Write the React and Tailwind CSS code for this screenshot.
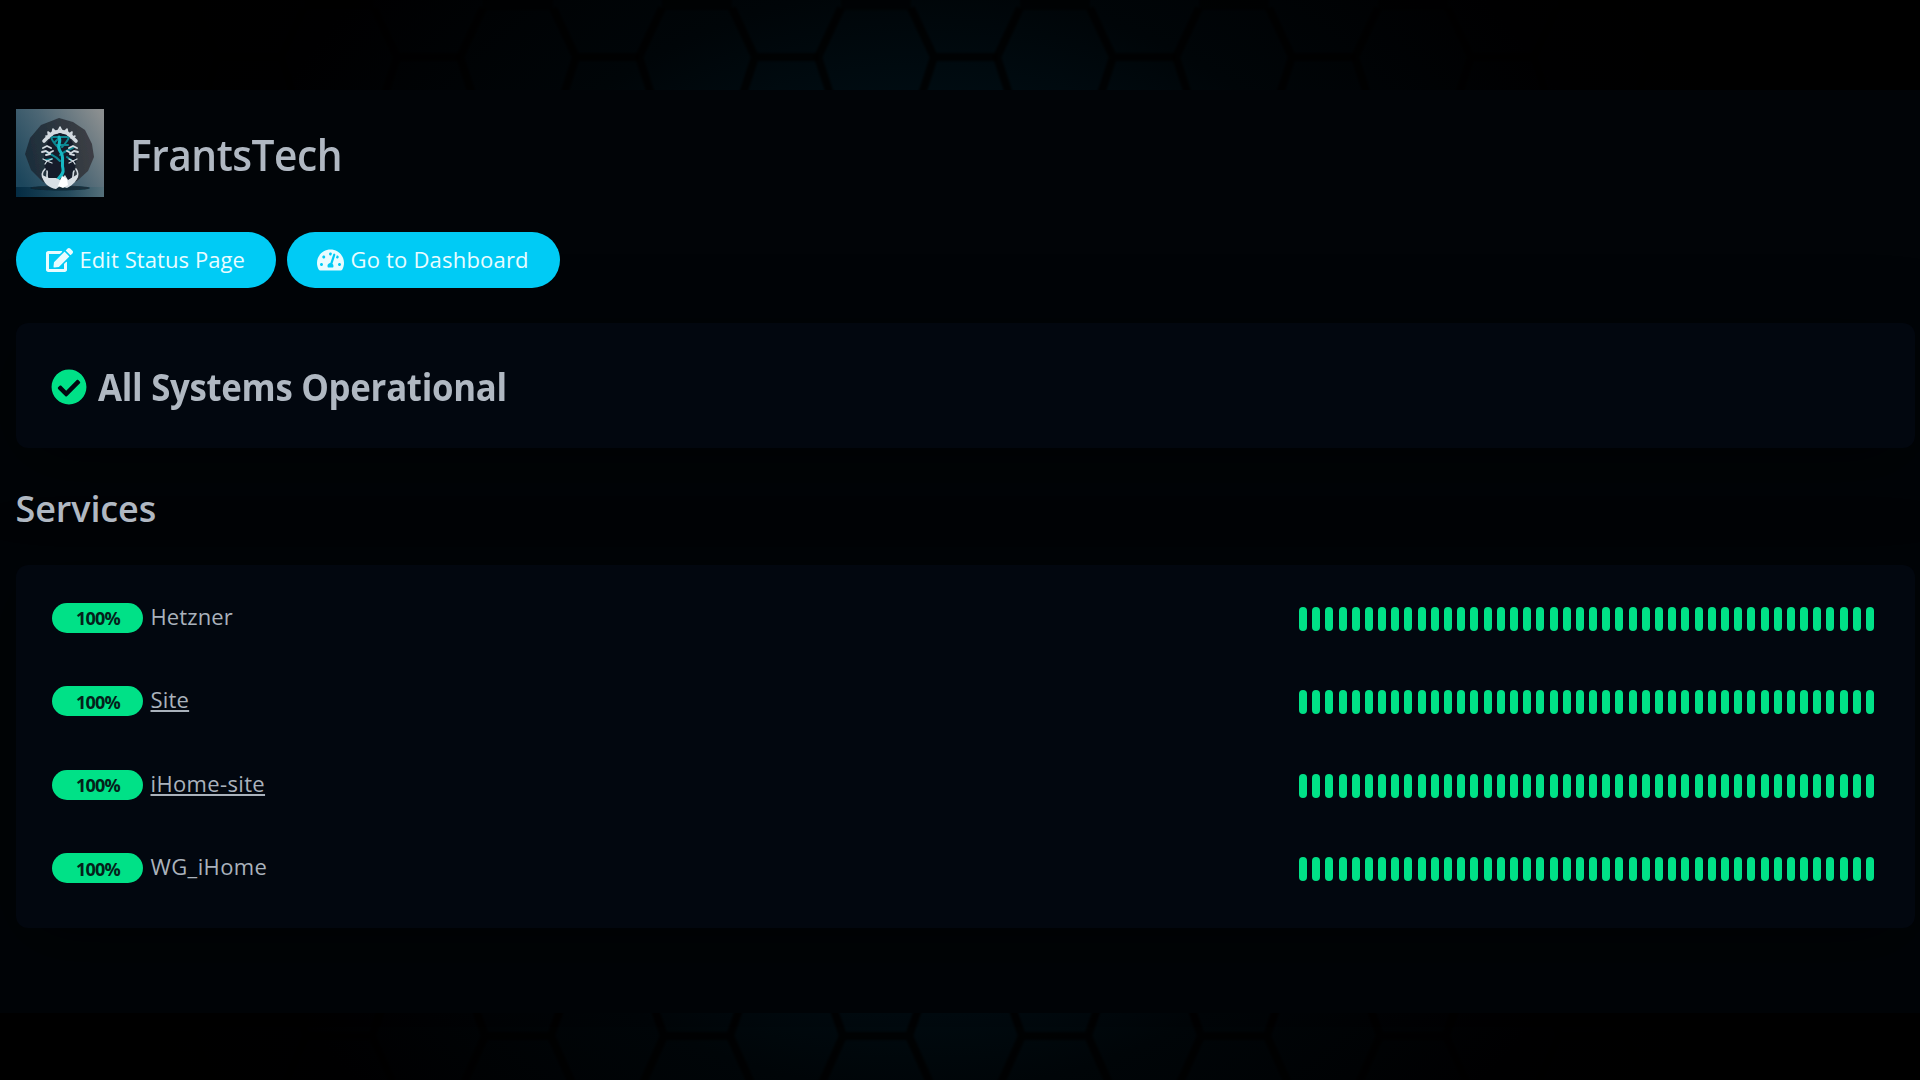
import React from "react";
import { FaEdit, FaTachometerAlt, FaCheckCircle } from "react-icons/fa";

const SERVICES = [
  { name: "Hetzner", link: false, cls: "tracking-[0.1px]" },
  { name: "Site", link: true, cls: "tracking-[0.2px]" },
  { name: "iHome-site", link: true, cls: "tracking-[0.35px]" },
  { name: "WG_iHome", link: false, cls: "tracking-[0.4px]" },
];

const BEATS = Array.from({ length: 44 });

const COLUMNS = [-3, -2, -1, 0, 1, 2, 3, 4, 5, 6];

function HexBackdrop() {
  return (
    <svg className="absolute inset-0 h-full w-full" viewBox="0 0 1920 1080" aria-hidden="true">
      <defs>
        <radialGradient id="glow" gradientUnits="userSpaceOnUse" cx="920" cy="540" r="920">
          <stop offset="0" stopColor="#001a26" />
          <stop offset="0.48" stopColor="#000c12" />
          <stop offset="0.6" stopColor="#000508" />
          <stop offset="0.85" stopColor="#000001" />
          <stop offset="1" stopColor="#000000" />
        </radialGradient>
        <filter id="haze"><feGaussianBlur stdDeviation="1.2" /></filter>
      </defs>
      <rect width="1920" height="1080" fill="url(#glow)" />
      <g fill="none" stroke="#000000" strokeWidth="8" strokeOpacity="0.8" filter="url(#haze)">
        {COLUMNS.map((c) => (
          <g key={c} transform={`translate(${518 + c * 179} 0)`}>
            <path d="M35 8L58 57L42 106M-35 8L-58 57L-42 106M58 57H121" />
            <path d="M-35 4H35" strokeWidth="12" strokeOpacity="0.6" />
            <path d="M-42 1010L-33 1036L-58 1092M42 1010L33 1036L58 1092M-33 1036H33" />
          </g>
        ))}
      </g>
    </svg>
  );
}

function TreeLogo() {
  return (
    <svg viewBox="0 0 88 88" className="size-[88px] shrink-0" aria-hidden="true">
      <defs>
        <linearGradient id="sky" x1="0" y1="0.75" x2="1" y2="0.1">
          <stop offset="0" stopColor="#1c465c" />
          <stop offset="0.5" stopColor="#4c6674" />
          <stop offset="1" stopColor="#8b8f90" />
        </linearGradient>
        <linearGradient id="floor" x1="0" y1="0" x2="1" y2="0">
          <stop offset="0" stopColor="#042c43" />
          <stop offset="0.6" stopColor="#254b5d" />
          <stop offset="1" stopColor="#55707a" />
        </linearGradient>
        <linearGradient id="disc" x1="0" y1="0.6" x2="1" y2="0.4">
          <stop offset="0" stopColor="#1b2c39" />
          <stop offset="1" stopColor="#3d3f45" />
        </linearGradient>
        <filter id="soft"><feGaussianBlur stdDeviation="0.6" /></filter>
      </defs>
      <rect width="88" height="88" fill="url(#sky)" />
      <rect y="78" width="88" height="10" fill="url(#floor)" />
      <g filter="url(#soft)">
        <ellipse cx="44" cy="79" rx="30" ry="2.5" fill="#0b202c" opacity="0.75" />
        <path d="M43 9L57 13L69 21L76 35L78 48L72 62L61 72L44 79L27 73L15 61L9 45L14 29L25 16Z" fill="url(#disc)" />
        <ellipse cx="44" cy="50" rx="16" ry="27" fill="#131f2c" />
        <g fill="none" stroke="#0e8792" strokeLinecap="round" strokeWidth="2">
          <path d="M44 52C39 46 36 47 31 43M44 46C50 41 54 41 58 38M43 39C38 35 36 31 35 28M46 38C50 34 52 31 53 28M39 33L44 28M40 36H52M36 50L30 51M51 48L55 51M37 28H51" />
        </g>
        <path d="M43 28C46 33 40 37 44 42C49 48 45 53 47 60C48 64 45 67 42 70" fill="none" stroke="#17b9c4" strokeWidth="3" strokeLinecap="round" />
        <g fill="none" stroke="#d3dae0" strokeLinecap="round" strokeLinejoin="round">
          <path d="M28 32L33 27L37 24L44 22L51 24L55 27L60 32" strokeWidth="3.6" />
          <path d="M30 27L33 29L32 23L36 26L37 20L41 24L44 18L47 24L51 20L52 26L56 23L55 29L59 27" strokeWidth="1.6" />
          <path d="M27 39L31 37L35 39M26 43L30 42L33 44L37 42M30 46L34 45M61 39L57 37L53 39M62 43L58 42L55 44L51 42M58 46L54 45" strokeWidth="1.9" />
          <path d="M27 50L31 52L36 50M29 55L31 52L36 54M61 50L57 52L53 50M59 55L57 52L53 54" strokeWidth="1.3" />
          <path d="M28 70C25 66 26 63 29 60M33 72C29 68 32 65 31 62M60 70C63 66 62 63 60 60M55 72C59 68 56 65 58 62" strokeWidth="1.6" />
        </g>
        <path d="M26 66L33 69L40 69L44 71L49 66L52 71L57 68L62 65C62 71 57 76 51 79L44 77L40 80C33 79 27 74 26 66Z" fill="#d9dfe4" />
        <path d="M42 77L46 67L51 70L52 76L47 79Z" fill="#ffffff" />
      </g>
    </svg>
  );
}

function ServiceRow({ service }) {
  return (
    <div className="flex h-[83.5px] items-start justify-between pt-[25px]">
      <div className="flex items-start">
        <span className="flex h-[30px] w-[91px] items-center justify-center rounded-full bg-[#00e187] pt-[1px] pl-px text-[18px] leading-none font-bold tracking-[-0.8px] text-[#04201a]">
          100%
        </span>
        <span
          className={
            (service.link ? "underline decoration-[1.5px] underline-offset-[2px] " : "") +
            "-mt-[2px] ml-[7.5px] text-[22px] leading-[30px] text-[#aab2bc] " +
            service.cls
          }
        >
          {service.name}
        </span>
      </div>
      <div className="mt-[4px] flex gap-[5.19px]">
        {BEATS.map((_, i) => (
          <span key={i} className="h-[24px] w-[8px] rounded-full bg-[#00e187]" />
        ))}
      </div>
    </div>
  );
}

export default function App() {
  return (
    <div className="relative h-[1080px] w-[1920px] overflow-hidden bg-black pt-[90px] font-['Open_Sans','Noto_Sans',sans-serif]">
      <HexBackdrop />
      <main className="relative h-[923px] bg-[#010407] pt-[18.5px] pr-[5px] pl-[15.5px]">
        <header className="flex h-[88px] items-center">
          <TreeLogo />
          <h1 className="ml-[26.5px] origin-left scale-x-[0.945] pt-[4px] text-[43px] leading-[60px] font-semibold tracking-[-0.5px] text-[#b0b8c2]">
            FrantsTech
          </h1>
        </header>

        <div className="mt-[35.5px] flex gap-[11px]">
          <button className="flex h-[55.5px] w-[260px] items-center rounded-full bg-[#00cbf5] pl-[30.5px] text-[22px] text-[#e9fcff]">
            <FaEdit className="h-[24px] w-[27px] shrink-0" />
            <span className="ml-[6.5px] tracking-[0.08px] whitespace-nowrap">Edit Status Page</span>
          </button>
          <button className="flex h-[55.5px] w-[273px] items-center rounded-full bg-[#00cbf5] pl-[30.5px] text-[22px] text-[#e9fcff]">
            <FaTachometerAlt className="h-[24px] w-[27px] shrink-0" />
            <span className="ml-[6.5px] tracking-[0.2px] whitespace-nowrap">Go to Dashboard</span>
          </button>
        </div>

        <section className="mt-[35.5px] flex h-[125px] items-center rounded-xl bg-[#02070f] pt-[2px] pl-[35.5px] shadow-[0_15px_70px_rgba(0,0,0,0.5)]">
          <FaCheckCircle className="size-[36px] text-[#00e187]" />
          <span className="ml-[11px] origin-left scale-x-[0.94] text-[37px] leading-[50px] font-bold tracking-[-0.3px] text-[#b0b8c2]">
            All Systems Operational
          </span>
        </section>

        <h2 className="mt-[36px] text-[36px] leading-[50px] font-semibold tracking-[-0.1px] text-[#b0b8c2]">Services</h2>

        <section className="mt-[31px] h-[363px] rounded-xl bg-[#02070f] pt-[12.5px] pr-[41px] pl-[36.5px] shadow-[0_15px_70px_rgba(0,0,0,0.5)]">
          {SERVICES.map((s) => (
            <ServiceRow key={s.name} service={s} />
          ))}
        </section>
      </main>
    </div>
  );
}
